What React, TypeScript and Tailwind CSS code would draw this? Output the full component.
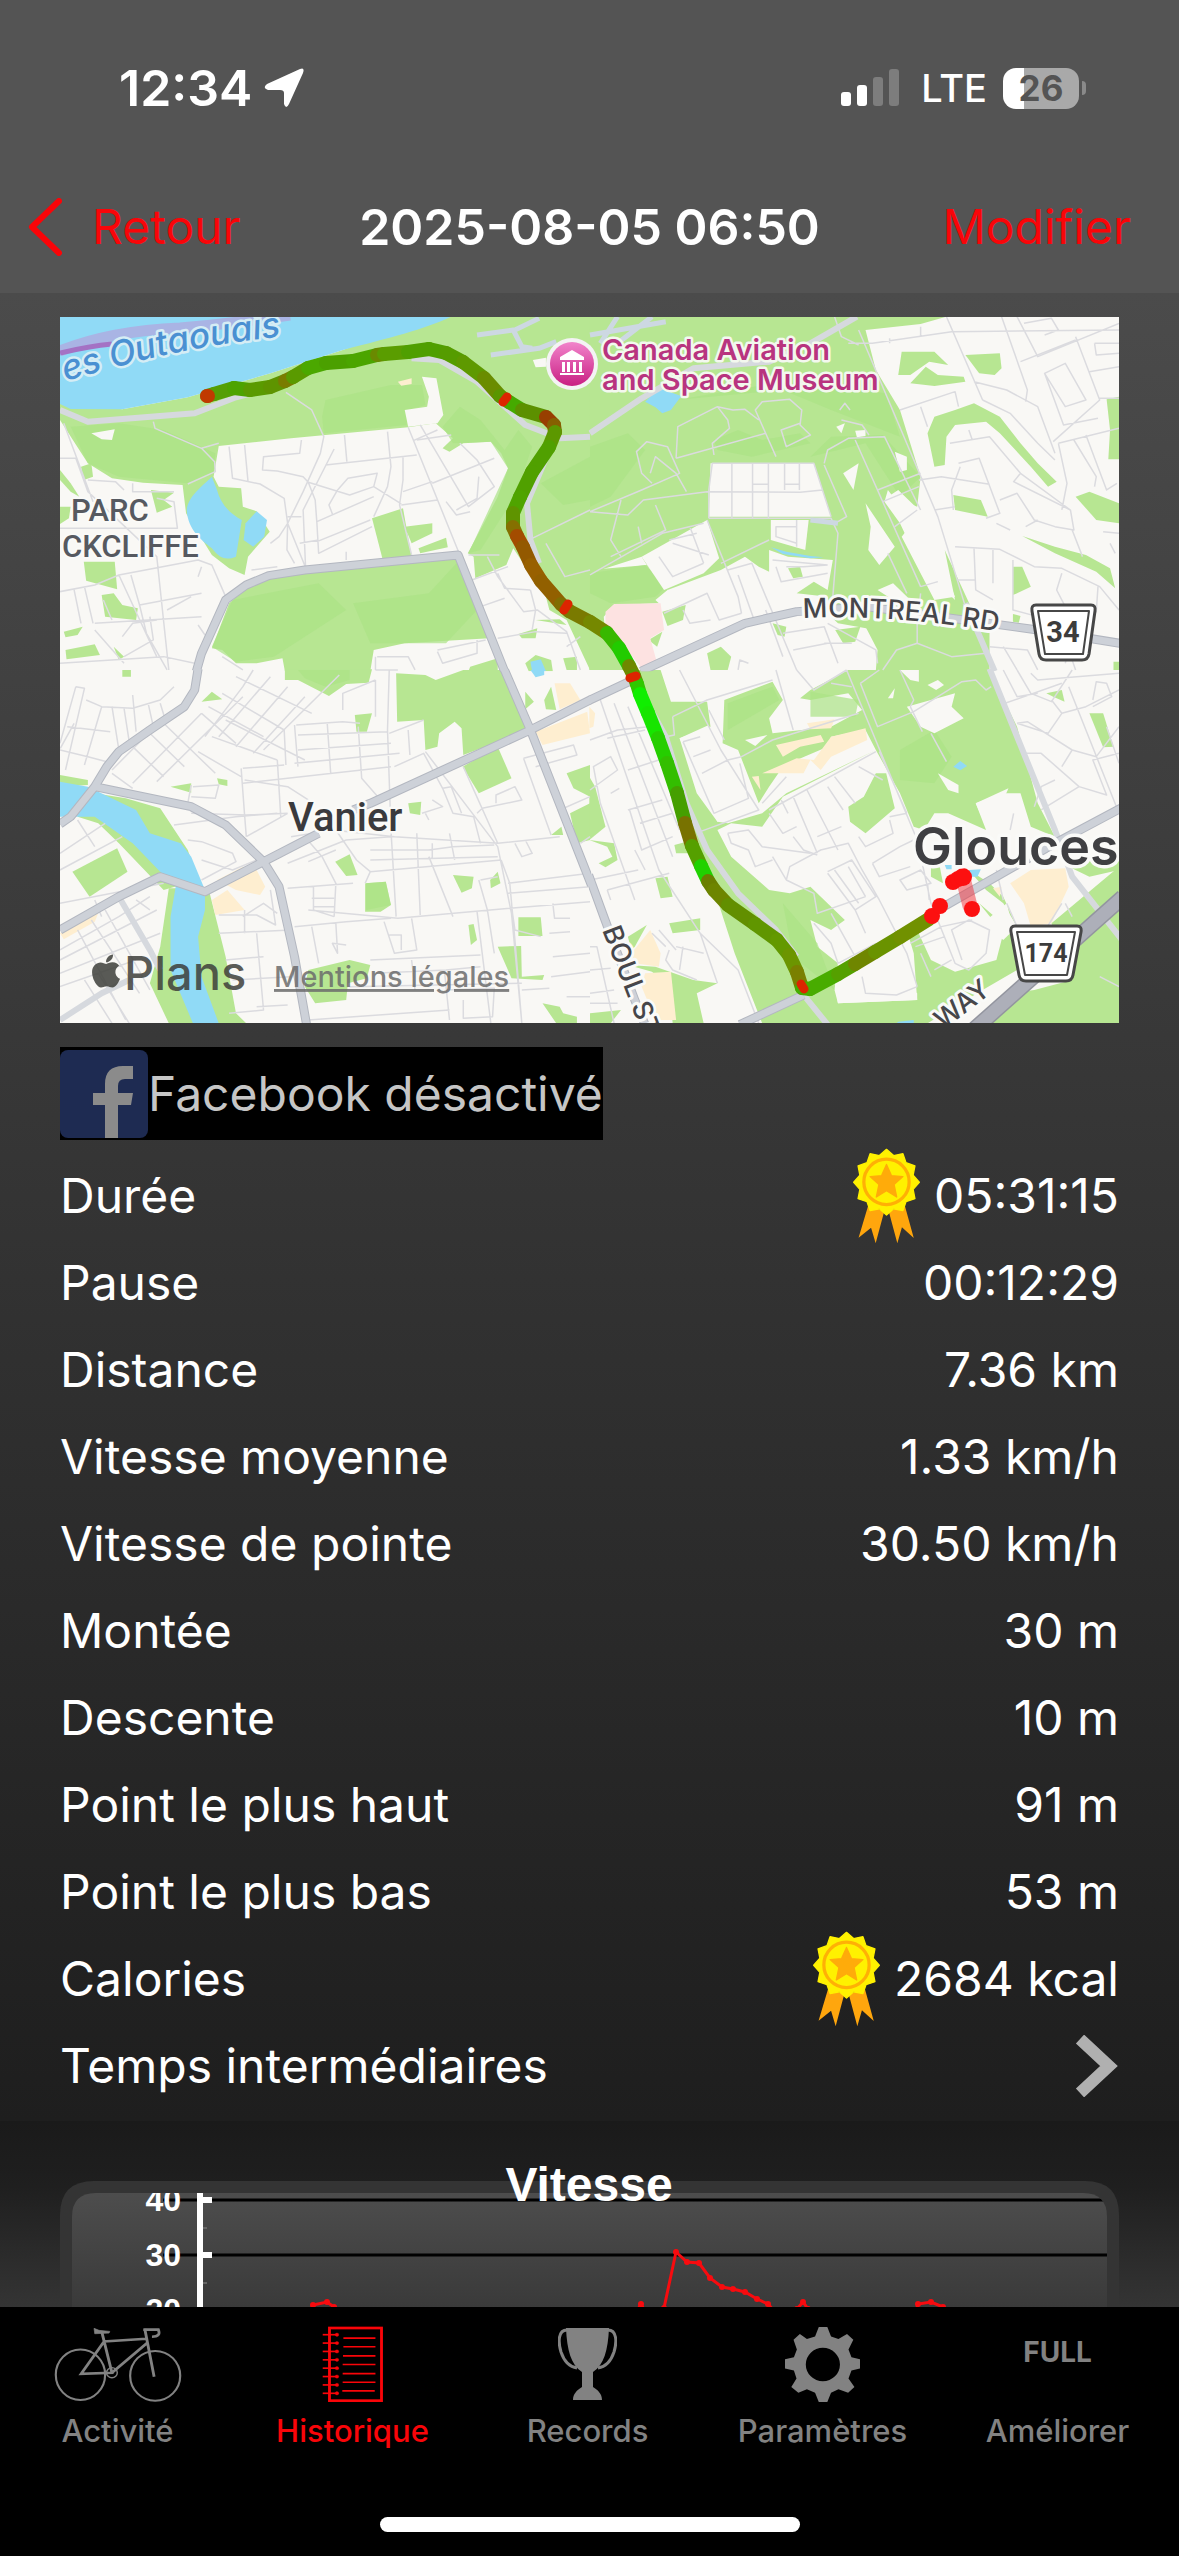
import { ReactNode } from "react";
import { FaApple } from "react-icons/fa";

const GREEN = "#b7e692";
const DEEP_GREEN = "#abe386";
const WATER = "#90daf6";

const stats = [
    { label: "Durée", value: "05:31:15", medal: true },
    { label: "Pause", value: "00:12:29" },
    { label: "Distance", value: "7.36 km" },
    { label: "Vitesse moyenne", value: "1.33 km/h" },
    { label: "Vitesse de pointe", value: "30.50 km/h" },
    { label: "Montée", value: "30 m" },
    { label: "Descente", value: "10 m" },
    { label: "Point le plus haut", value: "91 m" },
    { label: "Point le plus bas", value: "53 m" },
    { label: "Calories", value: "2684 kcal", medal: true },
];

// each tile is a quarter of the map with its own 1568x1080 grid
const tiles = [
    {
        x: 50,
        y: 310,
        green: [
            "M29 275L210 298L400 262L640 190L850 120L1165 0H1568V1080L1500 930L1450 900L1440 860L1400 800L1345 715L1325 765L1235 805L1230 740L1213 730L1260 640L1300 560L1330 475L1310 430L1280 395L1200 400L1160 425L1140 415L1170 385L1120 340L1040 352L700 385L490 408L475 500L490 530L555 535L560 590L600 604L638 665L575 740L565 795L520 775L470 735L395 610L385 525L270 518L180 505L110 460L29 330Z",
            "M470 1015L520 880L570 835L640 800L1185 745L1275 985L1030 1000L940 1020L930 1084H682L675 1045L600 1060L540 1060L500 1020Z",
            "M935 625L1025 595L1050 740L965 745Z", "M1030 650L1110 640L1110 670L1050 700Z",
            "M1070 715L1150 683L1155 712L1075 730Z", "M98 755H188L195 838L105 812Z",
            "M150 855L185 850L210 885L255 895L250 930L160 920Z", "M45 1020L130 1003L145 1035L48 1048Z",
            "M293 540L360 548L330 570L355 590L310 608Z", "M29 590H60L55 625L29 642Z", "M90 470L120 460L125 500L98 510Z",
            "M29 480L60 520L85 560L60 545L29 510Z", "M40 965L95 950L80 975L45 982Z", "M1360 972L1415 955L1410 985H1370Z",
            "M1380 1060L1410 1035L1455 1050L1460 1084H1390Z", "M1410 930L1480 928L1500 945Z", "M1220 1070L1300 1045V1084H1215Z",
            "M1490 1045L1530 1040V1080H1500Z", "M185 1010L215 1040L200 1050Z",
        ],
        deep: [
            "M60 350L200 340L330 360L480 430L475 490L400 520L200 500L110 460Z",
            "M800 270L990 225L1080 225L1090 285L1040 300L1035 345L795 370L790 320Z",
            "M1140 350L1190 290L1250 330L1320 420L1360 360L1400 410L1350 560L1250 720L1215 730L1330 475L1280 395L1170 400Z",
            "M1425 520L1568 440V570L1490 585Z", "M470 1010L530 870L780 820L860 900L650 1040L540 1055Z", "M880 880L1100 850L1180 760L1240 900L1150 1000L930 1000Z",
        ],
        water: [
            "M29 20H1165C1080 60 1000 80 850 120L640 190L400 262L210 298L60 297L29 282Z",
            "M470 500C440 530 400 560 397 600C400 660 440 690 470 715C495 750 515 750 540 740L557 630C520 610 495 580 485 540Z",
            "M600 604L630 630L622 680L590 710L562 690L568 640Z", "M1395 1055L1425 1048L1440 1084H1400Z",
        ],
        sand: ["M1010 215L1050 205V222L1020 227Z"],
        land: ["M120 370L188 358L180 390L150 388Z", "M1080 200L1122 205L1142 315L1125 340L1040 350L1030 300L1095 290L1100 260Z", "M1402 150L1440 143L1440 170L1410 172Z"],
        minor: "M29 445H75L110 545L310 740L345 1080M40 340L125 575M300 335L305 355L440 415L478 455L480 485L400 522M440 415L490 400M685 247L760 300L795 380L785 430L735 545L690 640L745 780M520 410L530 505L610 522L680 565L690 640L688 720L710 760M565 405L575 515M730 390L725 430L620 440L617 480L660 483L735 500L750 517L870 555L940 530L950 490L865 505L835 540L810 585L820 612M825 417L735 600L742 770M800 465L1065 435M855 375L862 455M980 365L990 470L980 530L940 620M1040 352L1190 735M1075 345L1215 590L1290 530L1240 450L1190 400M1290 445L1110 520M1055 392L1125 360M1065 390L1165 375M750 517L770 570L775 640L780 730L935 650M775 635L940 560M775 695L930 630M1025 440V510L1015 585L1050 735M1020 585L1125 570M940 530L1020 582M1110 515L1025 545M1180 600L1240 565L1245 500M1150 575L1180 615L1220 605M585 780L660 770M640 700L665 680L690 640M29 845L130 825L200 795L430 750L470 765L510 860M100 830L125 940M235 795L260 885L440 850M260 885L280 970L340 1080M130 940L440 920M200 795L310 1040M290 920L300 990L215 1040M410 860L340 900M70 840L90 940M155 870L180 930M29 655H370L360 575L310 565M110 510L190 515L215 540M240 520V545H360M210 980L240 940L310 930M440 770L430 800M29 1060L330 1040L420 1060M430 945L450 975M130 960L215 1060M1270 740L1300 800L1375 905L1415 900L1500 965L1540 1080M1225 810L1330 770M1250 890L1320 865M1300 790L1320 835L1395 840M1395 840L1410 900L1400 960M1300 985L1410 965L1500 970M1125 1020L1265 990M950 1040H1040L1060 1080M1125 1025L1140 1060L1240 1030V990M1400 685L1568 600M1440 700L1495 800L1568 780M1215 735H1305M500 1040L560 1080M945 1040V1080M690 620H730M725 700L780 690M860 725V750M1500 1010L1540 980",
        light: "M29 300L110 335L420 310L540 262L640 235M1050 145L1130 150L1240 215L1380 345L1480 385L1568 380M1450 420L1385 580L1395 690L1420 760",
        major: "M425 1084L440 1030L510 870L570 825L635 797L740 780L1185 735L1320 1084",
        minorPaved: "M1240 75L1345 60L1370 110L1400 115M1350 60L1420 25M1280 135L1420 115L1470 95",
    },
    {
        x: 590,
        y: 310,
        green: [
            "M-2 20H1035L960 42L800 60L830 180L900 300L960 500L950 590L880 560L865 540L855 575L900 640L960 770L1060 870L1030 720L1110 900L1160 960V1080H860L830 960L720 940L700 920L690 860L600 850L650 815L690 840L705 750L575 740L520 720L520 785L490 770L450 740L380 780L225 840L165 765L150 740L0 790Z",
            "M-2 780L165 765L225 840L190 870L200 880L70 885L40 920L45 980L110 1050L130 1080H-2Z",
            "M905 125H1000L1040 165L985 155L930 195H895Z", "M1090 135L1190 130L1195 175L1175 195L1130 190Z",
            "M930 220L975 170L1010 195L1085 200L1090 215L1000 228Z",
            "M1000 470L980 370L1000 320L1060 300L1115 280L1190 320L1250 400L1300 460L1355 515L1330 530L1280 470L1190 370L1150 335L1060 345L1035 380L1030 465Z",
            "M1500 268L1536 260V448H1505L1510 360Z", "M1410 560L1450 545L1536 580V640L1470 630Z",
            "M1055 555L1135 570L1155 620L1060 600Z", "M1255 678L1350 710L1440 735L1510 775L1525 835L1470 785L1350 730Z",
            "M1228 770H1255L1280 830L1240 850L1228 855Z", "M210 905L278 885L270 930L225 948Z", "M530 940L570 950L565 980L545 975Z",
            "M712 960L785 950L770 995L735 1000Z", "M170 990L210 965L195 1010Z", "M340 1030L380 1010L410 1040L400 1080H350Z",
            "M575 775L610 770L618 800L590 805Z", "M1228 912L1250 918L1245 938L1228 935Z", "M1520 1055H1536V1080H1520Z", "M800 950H1110L1160 1080H830L835 1020Z",
        ],
        deep: [
            "M0 410L110 370L160 420L60 560L0 590Z", "M360 390L430 360L500 390L610 370L640 400L470 440L370 420Z",
            "M700 380L850 375L960 500L900 560L800 400L640 440Z", "M250 270L560 215L860 250L900 380L700 300L560 240Z", "M0 790L160 765L220 830L190 860L60 880L0 850Z",
        ],
        water: ["M160 275L200 235L265 258L235 300L210 310L190 292Z", "M525 712L570 725L640 738L678 742L640 745L560 732Z"],
        sand: [],
        pink: ["M45 905L70 882L205 880L215 960L175 985L195 1060L150 1075L100 1010L45 975Z"],
        land: [
            "M350 460H650L700 620H345Z", "M525 630H635L625 720L525 690Z", "M150 740L340 630L375 745L330 790L215 840Z", "M800 580L885 710L840 765L808 720L815 650Z",
            "M735 490L780 460L765 540Z", "M885 425L920 440V480L900 485Z", "M865 560L895 540L955 600L1060 860L1000 870L905 680L950 620L880 590Z", "M715 350L740 340L730 370Z",
            "M770 362L800 360V378L775 382Z", "M835 840L880 820L940 880L880 870Z",
        ],
        minor: "M345 625H700L720 670L705 860M340 545L610 547L675 540M412 460V625M472 460V625M518 460V625M565 460V540M608 460V540M472 523H518M565 523H608M345 625V540L355 460H650L700 620M340 630L430 860L440 910M250 445L510 370L480 300L500 275L580 268L615 300L610 345L640 375L570 410L555 360L610 340M510 370L540 440M250 445L255 350L370 290L400 330L405 355L355 400L360 435M370 290L415 300L450 298L490 330M0 605L150 540L260 490L225 410L165 395L135 425L150 490L180 520M175 490L190 440L250 490L280 545M0 605L110 615L155 570L340 545M190 585L220 660L60 740M90 570L60 690L90 740M140 650L150 700M0 795L210 670L330 640M230 690L310 670M240 700L345 735M200 740L240 800L330 760M290 650L330 760M680 460L690 420L750 385L855 380L960 600M770 390L960 830M680 465L745 620L720 635M835 540L960 490M850 575L955 530M885 650L950 600M865 730L920 850M960 830L1010 815M780 60L1010 620L1090 890M750 100H820L1050 65L1536 60M710 20L730 80L780 105M1035 20L1140 270M1115 215L1210 240L1300 290L1350 430M1140 270L1220 310L1300 400L1350 450M1195 20L1270 240L1265 275M1240 20L1300 140L1536 40M1250 155L1410 90M1410 80L1480 270L1345 395M1480 265H1536M1320 190L1380 160L1440 270L1380 290ZM1320 190L1375 345L1475 325M1360 400L1536 355M1360 400L1385 520L1370 600M1405 390L1470 500L1465 530M1440 375L1500 540L1530 520M1465 100H1536M1465 100L1470 135L1536 130M1450 185L1536 170M1260 40L1340 25L1360 60L1320 75M900 300L1060 245L1070 290M960 290L980 350M1045 400L1160 380L1250 490L1395 600L1405 660L1350 650L1290 630L1240 550L1190 570M1100 360L1110 390M1070 460L1130 445L1190 610L1150 625M1055 600L1050 540L1075 470M955 510L1020 500L1160 523M1000 600L1060 590M1180 640L1220 660M1265 650L1300 630M1250 490L1230 515L1395 600M1400 660L1430 740M1060 710L1190 718L1290 770L1370 775L1480 830L1536 900M1115 715L1120 840L1170 870M1065 810H1120M1170 720V820M1228 750V900L1300 920M1370 790L1355 840L1380 890L1470 905L1475 830M1490 665L1536 670M1510 700L1525 730M380 760L520 690M400 780L470 760L600 1080M430 795L480 940M510 900L560 1040M540 770L555 815L690 790M530 750L690 765M570 770H620L690 765M560 970L680 950L720 1060M680 1000H760M690 940L830 1020L835 1060M590 1020L690 1000M215 910L340 850L375 930L440 910M270 900L290 940L350 930M850 1080L890 1020L950 1000L1050 1040L1150 1030M950 940V1000M950 940L960 850M1200 1010L1240 1080M1160 1010L1270 1020L1300 1080M1380 1060L1390 1020L1410 1080M430 1080L435 1050L460 1060M540 650H600V700L540 680ZM600 630V710M725 300L740 280L755 300M730 330L790 345L810 375M870 100V85M960 80V50",
        light: "M0 370L150 265L300 175L520 155L640 100L775 20M1090 880L1175 1084",
        major: "M148 1084L450 940L600 905L800 890L1300 960L1568 1005",
        minorPaved: "M0 75L220 35M30 100L80 20M80 100L180 20M640 630L720 640",
    },
    {
        x: 50,
        y: 670,
        green: [
            "M682 -2H935L925 38L860 42L810 78L720 30H682Z", "M1005 10L1090 15L1120 30L1200 0H1320L1390 180L1200 255L1195 175L1175 155L1130 190L1125 230L1090 240L1085 150L1008 155Z",
            "M1198 290L1300 230L1340 325L1245 370Z", "M885 135L935 130L920 185H890Z", "M440 95L470 65L500 88Z", "M350 350L410 340V368Z", "M485 325L515 330V348L490 343Z",
            "M29 315L110 330V345L29 350Z", "M130 370L220 385L320 415L400 540L430 630L330 660L200 520L140 460L80 440Z", "M65 605L195 535L225 605L115 680Z",
            "M345 655H460L510 860L540 1030L570 1060H345L290 940L320 830Z", "M828 575L870 553L893 615L860 618Z", "M915 640L975 635L990 705L960 725H915Z",
            "M1170 615L1230 620L1225 655L1195 668Z", "M1278 630L1300 605L1308 640L1280 655Z", "M1040 400L1078 395L1075 435L1045 430Z", "M1360 742H1425L1430 798H1360Z", "M1215 765L1230 762L1240 810L1222 825Z",
            "M750 900L870 870L930 885L920 925L865 940L860 990L770 1000L740 950Z", "M1300 830L1368 828L1370 920L1435 915L1430 930L1340 925Z", "M1430 1000L1480 1010L1490 1030L1530 1040V1060H1470Z",
            "M1500 310L1568 285V380L1520 355Z", "M1568 400L1510 430L1530 520L1568 510Z", "M1380 65L1405 95L1380 118Z", "M1435 90L1455 50L1470 120L1440 118Z", "M1455 495L1485 470L1490 495Z", "M210 0H235V20H210Z",
        ],
        deep: ["M720 0L870 0L870 30L800 50L740 25Z", "M918 640L975 635L990 705L918 720Z"],
        water: [
            "M29 335L110 350L250 420L290 490L380 520L410 560L450 660L450 720L430 800L440 920L490 1060H415L350 900V740L365 650L320 605L240 520L130 440L29 440Z",
            "M1395 0H1435V15L1410 22Z",
        ],
        sand: ["M485 630L560 590L600 600L625 650L610 675L540 660Z", "M470 690L515 660L565 720L480 735Z", "M1410 185L1560 125L1568 190L1430 225Z", "M1465 40H1510L1540 90L1480 118Z", "M29 790L140 730L130 755L40 808Z"],
        land: [],
        minor: "M29 240L110 260L165 275M75 50L100 55L45 300M75 50L29 220M105 90L150 110L240 115L320 90L360 50M150 110L100 285M180 110L200 240M215 115L230 215M240 75L250 185M285 100L300 170M320 100L335 150M50 170L175 185M30 235L70 160M310 335L560 80M180 300L290 185M240 340L440 130M180 310L240 355M240 230L330 320M290 190L390 290M330 160L480 310M440 130L540 220M460 110L620 200M500 70L680 180M540 20L760 130M590 0L560 50L450 200M640 20L490 200M690 50L540 230M740 80L590 250M840 15L620 240M430 245L555 320M470 200L660 270M510 150L740 270M710 165L720 290M680 180L685 285M715 165L850 155L900 160M720 195L980 185M720 240L990 220M710 280L1015 250M560 295L680 285M560 340L820 310L990 290M555 295L565 435L570 500M660 270L670 440M805 160L815 310M895 170L905 325L960 390M985 0L980 180L990 480M945 30V140M1010 0H945M945 30L850 70V120M1040 180L1045 255M985 190L1085 150M1000 290L1085 250L1140 355L1170 430L1230 440L1250 520M1140 355L1165 350L1195 430M1090 245L1300 530L1340 730L1370 1060M1200 290L1300 520M1240 430L1255 415L1370 390L1350 350L1295 375V400M1375 265L1520 225L1530 255L1410 290M1375 265L1455 495M690 430L570 435L410 430M565 330L690 350L750 390M570 500L690 430M415 350L490 345L480 385L410 380M410 345L400 400M360 465L540 440L660 430M400 510L440 515L530 550L540 575L440 630M440 570L530 600L600 570M740 500L790 560L830 640L825 740M810 450L890 570L930 605L915 640M700 500L820 480L1000 500L1300 520L1480 500M690 580L860 510L990 500M750 575L830 540M930 540H1100L1170 530L1290 525M930 570L1300 560M930 605L1310 570M990 480L1005 740M1065 490L1075 735M1110 520V565M1160 490L1175 570M1350 520L1370 560L1400 550L1380 510M690 655L880 640M760 685H825M765 710H825M750 720L1010 745L1335 715L1568 695M710 770L860 755L990 745M765 650V720L825 740M760 770L780 880M830 760L835 850L820 820L860 825M970 755L1000 850L1065 840L1050 745M985 795H1020V840M1100 560L1170 740M1240 725L1280 1060M1270 720L1290 850M1310 570L1335 640L1350 810L1370 1060M1330 640L1568 610M1330 670L1568 650M1340 710L1350 780L1425 800M1460 700L1465 745H1510M1450 790L1510 785M1460 860L1568 850M1455 920L1568 905M1370 960L1450 955M930 870L1250 855M940 910L1150 900L1250 890M1050 870L1060 960M1145 900L1160 1050M870 950L1370 940M1150 960L1290 955L1285 1040L1200 1045V990M750 1050L1160 1020M600 790L620 1020L520 1030M490 735H600L655 765L640 660M565 720V790M490 790L700 780M510 870L620 860M530 930L700 920M600 1010L690 1005M210 500L29 600M29 550L160 460M80 450L130 530M130 690L150 740M29 700L330 640M80 780L220 1050M120 750L260 970M29 870L310 720M29 910L320 790M29 950L250 870M140 910L230 1060M100 930L180 1060M29 840L200 740L290 680M250 690L290 720M160 720L290 960M1250 630L1300 620M1245 630L1270 720M1540 520L1568 500M1480 420L1568 380M1500 980H1568M1110 390L1140 410L1080 430M1090 430L1100 450M560 740L620 700L660 730",
        light: "M200 680L290 840L320 900M29 1050L150 970L230 930",
        major: "M430 -4L420 60L390 110L290 180L200 245L165 290L130 350L60 440L29 462M130 350L410 410L510 465L620 575L665 650L710 860L745 1064M29 780L200 680L320 620L450 665L620 575L780 490M880 420L930 400L1395 180L1572 88M1318 -4L1395 180L1572 645",
        minorPaved: "",
    },
    {
        x: 590,
        y: 670,
        green: [
            "M130 0H205L235 95L340 95L350 170L260 205L310 370L370 455L400 460L500 430L570 370L830 240L800 180L700 200L690 230L600 270L560 290L520 350L490 400L430 240L385 220L390 90L530 35L560 90L520 145L530 190L700 170L790 120L750 70L640 90L610 85L640 60L750 0H1160L1240 170L1300 400L1350 500L1280 470L1250 370L1200 370L1120 400L1150 480L1040 430L1000 430L970 480L940 470L900 370L830 240L560 380L500 470L410 460L370 480L410 560L520 660L580 670L640 650L740 750L700 780L640 750L660 830L720 880L710 960L720 1000L950 990L940 850L920 780L950 780L990 870L1060 905L1180 870L1200 790L1130 700L1220 780L1240 900L1140 960L1060 1010L980 1060H500L420 850L370 690L310 560L230 250Z",
            "M750 410L795 380L830 310L860 310L885 415L800 490L755 455Z", "M-2 320L15 350L45 470L-2 510Z", "M25 580L65 560L50 530L-2 510L70 520L80 570L45 592Z", "M245 525L280 515L305 550H250Z",
            "M190 625L225 620L240 680L205 685Z", "M230 760L320 745V780L240 790Z", "M110 800L165 765L130 830L120 840Z", "M1325 70L1370 60L1378 95L1345 80Z", "M1450 130L1490 130L1520 230L1490 232Z",
            "M1340 760L1536 590V1060H1150L1220 970L1290 960L1400 930Z", "M110 885L190 890L300 930L370 940L310 970L330 1060H240L230 950L180 905Z", "M0 1030L90 1020L60 1060H0Z", "M1010 560L1025 640L990 620V560Z",
            "M1380 585L1536 560V600L1450 620Z", "M1100 600L1160 640L1200 680L1240 770L1200 700L1150 660Z",
        ],
        deep: ["M400 100L530 50L550 90L400 180Z", "M900 240L1000 180L1050 260L1000 340L900 330Z", "M560 700L660 820L710 960L590 860Z", "M640 65L780 90L770 140L640 140Z"],
        water: ["M1055 290L1075 273L1095 288L1075 301Z", "M1100 600L1135 598L1125 620H1105Z", "M895 1055L940 1050V1060H890Z", "M1030 585H1050V598H1035Z"],
        sand: [
            "M630 160L710 148L700 175L640 178Z", "M540 225L670 195L680 215L610 230L560 260Z", "M500 310L600 265L650 270L700 200L800 175L805 210L700 260L670 300L640 270L620 310Z", "M1220 640L1280 600L1380 595L1390 650L1340 760L1280 770L1260 700Z",
            "M1170 655L1195 650L1190 680Z", "M120 850L175 780L205 850L200 890L130 880Z", "M160 910L235 905L250 1050H190L150 950Z", "M-2 110L15 130L10 170L-2 175Z", "M470 320L490 318L495 360Z",
        ],
        land: ["M920 110L1060 70L1050 110L1085 145L1000 190L960 170Z", "M865 85L885 55L880 85Z", "M980 45L1010 30L1028 45L1005 60Z", "M1010 310L1070 345V370L1040 360Z", "M1120 400L1215 355L1200 390L1155 480Z", "M450 210L515 195L480 228Z", "M260 205L345 165L360 230L430 260L485 410L370 455Z", "M710 935L830 910L950 970V990L720 1000Z", "M1140 760L1210 700L1230 780L1200 810Z", "M900 0H955V35L930 30Z"],
        minor: "M30 90L200 600L320 790L370 940M70 100L240 560M110 110L260 480M0 210L80 180L170 170M50 205L160 180M110 300L200 270M0 360L80 300L60 260L10 290L30 400L130 690M110 420L210 390M115 420L150 540L240 500M145 460L240 430M60 370L85 355M130 540L160 600M50 660L230 610M0 630L140 600M60 690L50 660M240 140L340 90L530 30M240 140L245 195L220 200M345 120L390 210M260 0L380 240L490 420L320 485M270 215L320 200M300 260L350 240M325 310L400 270L440 260L530 210L780 130M270 215L360 430L460 385L435 280M540 0L590 180M600 0L650 60L745 0M700 40L760 50M745 0L950 510L990 700M785 40L835 170L940 125L1080 35L1120 30L1150 60L1165 50M785 40L840 0M900 0L940 90L930 110L965 185M990 190L1035 275M840 245L920 430M520 420L830 245M520 430L560 490L600 470M555 390L575 430M590 380L660 550M630 360L720 540M690 350L735 420M710 320L770 400M780 290L850 330M590 500L620 540L660 555M660 500L730 470M400 490L460 480L500 530L640 550M400 490L410 520L460 540L480 590L530 570M530 560L570 630L580 590L670 540L750 520L790 600L840 690L920 850L950 950M690 605L760 570L830 680L770 720L690 610M710 600L780 700M750 590L800 680M570 630L650 670L660 730L800 680M650 760L700 820L720 880L830 820M700 730L770 860M770 720L800 790M820 580L900 530L940 510M820 580L840 620L930 590M900 630L960 600L990 640L920 660ZM780 500L800 530L880 490L870 450M870 440L920 430M500 400L570 320M990 700L1060 880L1100 900L1150 850L1160 780L1100 750L1050 780L1080 870M930 820L1020 770L1110 750M945 830L1030 800M1000 900L1050 870M960 850L990 920M980 640L985 690M1200 0L1240 80L1300 70M1240 0L1280 70L1340 95L1400 0M1205 100L1370 40M1280 10L1300 30L1536 10M1340 90L1370 130L1440 110L1536 60M1370 130L1330 190L1240 160M1240 160L1270 155L1400 240L1470 260L1536 170M1260 250L1310 250L1420 350L1500 375L1460 270L1536 250M1310 420L1420 350M1290 410L1310 350L1350 330M1400 240L1370 290M1390 50L1536 430M1460 90L1470 35L1500 40L1515 80L1460 110M1500 170L1536 280M1230 430L1220 480M1210 700L1240 770M250 830L330 850M230 840L220 870L240 900L310 930M270 830L260 900M180 790L220 830M200 780L250 840M0 900L60 895M0 970L70 960M0 1000L80 1000M320 790L430 900L490 1060M790 920L800 970L890 975L950 950M1480 920L1536 950M1400 740L1380 700M1310 800L1370 700M1180 600L1200 690M0 830H20L70 1060",
        light: "M140 50L220 200L280 400L340 540L430 670L540 780L600 860M1160 -4L1350 480L1400 620L1560 830M620 975L690 1064",
        major: "M-4 92L140 22M435 1064L620 975M1010 720L1350 520L1568 400M-4 615L40 740L130 990L160 1064",
        minorPaved: "",
    },
];

const route: [number, number, string][] = [
    [207, 396, "#c03a00"], [214, 394, "#689600"], [234, 388, "#559f05"], [250, 390, "#4da300"], [270, 387, "#5a9a00"], [285, 381, "#5e9400"],
    [293, 377, "#7a7c00"], [308, 368, "#5a9a00"], [326, 363, "#4ba800"], [353, 361, "#4ba000"], [377, 355, "#4ba500"], [384, 354, "#6a8a00"], [408, 352, "#5a9d00"],
    [429, 349, "#4f9f00"], [446, 353, "#4f9f00"], [463, 362, "#559c00"], [484, 378, "#5e9900"], [500, 396, "#6a8c00"], [509, 402, "#5a9600"], [522, 410, "#45aa00"],
    [546, 417, "#5c9000"], [554, 425, "#983f00"], [555, 432, "#866000"], [549, 447, "#5c9800"], [532, 472, "#50a000"], [520, 497, "#50a000"], [513, 513, "#4fa400"], [513, 527, "#5f9400"],
    [517, 536, "#857000"], [523, 547, "#a34c00"], [531, 565, "#935900"], [541, 581, "#986000"], [561, 604, "#926000"], [569, 611, "#806e00"], [590, 622, "#7a7a00"], [607, 633, "#758800"], [619, 648, "#38b800"],
    [629, 666, "#22cb00"], [634, 676, "#6f8800"], [637, 684, "#5a9800"], [640, 694, "#30c800"], [648, 713, "#10ee00"], [658, 738, "#17e500"], [667, 763, "#25ce00"], [677, 793, "#33be00"],
    [685, 823, "#459f00"], [692, 846, "#787200"], [701, 866, "#55a000"], [708, 881, "#20d200"], [714, 890, "#6a7f00"], [728, 905, "#6d8500"], [755, 924, "#628f00"], [777, 940, "#609600"],
    [789, 955, "#639900"], [797, 972, "#6c9500"], [802, 988, "#7a8000"], [810, 989, "#42ae00"], [838, 974, "#48ac00"], [855, 964, "#55a000"], [875, 952, "#6f8600"], [900, 937, "#6a9300"], [929, 919, "#719100"],
];

const routeStops = [
    { x: 932, y: 916, r: 8 },
    { x: 940, y: 906, r: 8 },
    { x: 953, y: 882, r: 8 },
    { x: 958, y: 879, r: 8 },
    { x: 963, y: 877, r: 9 },
    { x: 972, y: 909, r: 8 },
];

const halo = { paintOrder: "stroke" as const, strokeLinejoin: "round" as const };

function RouteMap() {
    const layer = (render: (tile: (typeof tiles)[number]) => ReactNode) =>
        tiles.map((tile, i) => (
            <g key={i} transform={`translate(${tile.x} ${tile.y}) scale(0.3444 0.3333)`} clipPath="url(#tile)">
                {render(tile)}
            </g>
        ));

    return (
        <svg viewBox="60 317 1059 706" className="block w-full bg-[#f9f8f5]" aria-label="Plan du parcours">
            <defs>
                <clipPath id="tile"><rect x="-4" y="-4" width="1576" height="1088" /></clipPath>
                <linearGradient id="pin" x1="0" y1="0" x2="0" y2="1">
                    <stop offset="0" stopColor="#f184cb" />
                    <stop offset="1" stopColor="#c91f83" />
                </linearGradient>
                <path id="river" d="M65 381Q105 370 140 361Q200 345 310 333" />
                <path id="montreal" d="M790 619Q885 612 1012 634" />
                <path id="boul" d="M602 930L656 1070" />
                <path id="way" d="M937 1035L1010 979" />
            </defs>

            {layer((t) => t.green.map((d, i) => <path key={i} d={d} fill={GREEN} />))}
            {layer((t) => t.deep.map((d, i) => <path key={i} d={d} fill={DEEP_GREEN} opacity="0.7" />))}
            {layer((t) => (
                <>
                    {t.land.map((d, i) => <path key={i} d={d} fill="#f9f8f5" />)}
                    {t.sand.map((d, i) => <path key={i} d={d} fill="#feeed0" />)}
                    {t.pink?.map((d, i) => <path key={i} d={d} fill="#fde2e1" />)}
                    {t.water.map((d, i) => <path key={i} d={d} fill={WATER} />)}
                </>
            ))}
            <path d="M60 351Q110 331 180 328Q230 324 290 315" fill="none" stroke="#a9b4e4" strokeWidth="11" />
            <path d="M60 353Q90 346 112 344" fill="none" stroke="#a472c4" strokeWidth="5" />

            <g fill="none" strokeLinejoin="round">
                {layer((t) => <path d={t.minor} stroke="#dbdbdf" strokeWidth="1.5" vectorEffect="non-scaling-stroke" />)}
                {layer((t) => <path d={t.minorPaved} stroke="#cdd8e2" strokeWidth="5" vectorEffect="non-scaling-stroke" />)}
                {layer((t) => <path d={t.light} stroke="#d6d9de" strokeWidth="6" vectorEffect="non-scaling-stroke" />)}
                {layer((t) => <path d={t.major} stroke="#b3b7c0" strokeWidth="9" vectorEffect="non-scaling-stroke" />)}
                {layer((t) => <path d={t.major} stroke="#cdd1d8" strokeWidth="7" vectorEffect="non-scaling-stroke" />)}
                <path d="M970 1033L1123 897" stroke="#93959f" strokeWidth="16" />
                <path d="M970 1033L1123 897" stroke="#adafb9" strokeWidth="13" />
            </g>

            <g strokeWidth="14" strokeLinecap="round">
                {route.slice(1).map(([x, y, color], i) => (
                    <line key={i} x1={route[i][0]} y1={route[i][1]} x2={x} y2={y} stroke={color} />
                ))}
                <path d="M207 396h1" stroke="#c03a00" />
                <path d="M507 397l-4 5M568 604l-4 6M630 678l6 -2M801 984l3 5" stroke="#dc2500" strokeWidth="9" />
                <path d="M964 882L970 906" stroke="#f3303a" strokeWidth="15" opacity="0.5" />
            </g>
            {routeStops.map((stop) => <circle key={stop.x} cx={stop.x} cy={stop.y} r={stop.r} fill="#fc1010" />)}

            <circle cx="572" cy="364" r="26" fill="#f4f3f4" />
            <circle cx="572" cy="364" r="22" fill="url(#pin)" />
            <path d="M560 360V357L572 350L584 357V360ZM562 362h3v10h-3zM567 362h3v10h-3zM573 362h3v10h-3zM579 362h3v10h-3zM560 373h24v2h-24z" fill="#fff" />
            <g fontFamily="Inter, sans-serif" fontWeight="600" fontSize="29" fill="#b8347f" stroke="#f3f8ee" strokeWidth="5" {...halo}>
                <text x="602" y="360">Canada Aviation</text>
                <text x="602" y="390">and Space Museum</text>
            </g>
            <g fontFamily="Roboto, sans-serif" fontWeight="500" stroke="#fafaf8" {...halo}>
                <text x="71" y="521" fontSize="31" fill="#565960" strokeWidth="4">PARC</text>
                <text x="62" y="557" fontSize="31" fill="#565960" strokeWidth="4">CKCLIFFE</text>
                <text x="288" y="831" fontSize="40" fill="#3a3a3d" strokeWidth="5">Vanier</text>
            </g>
            <g fontFamily="Inter, sans-serif" fontWeight="500" fontSize="27" fill="#46464a" stroke="#fafaf8" strokeWidth="6" {...halo}>
                <text textAnchor="middle"><textPath href="#montreal" startOffset="50%">MONTREAL RD</textPath></text>
                <text><textPath href="#boul">BOUL ST</textPath></text>
                <text><textPath href="#way" startOffset="8">WAY</textPath></text>
            </g>
            <text fontFamily="Inter, sans-serif" fontWeight="500" fontStyle="italic" fontSize="35" fill="#4a90d2" stroke="#d5edf5" strokeWidth="5" {...halo}>
                <textPath href="#river">es Outaouais</textPath>
            </text>
            <text x="913" y="865" fontFamily="Inter, sans-serif" fontWeight="600" fontSize="52" fill="#3f3f42" stroke="#fafaf8" strokeWidth="7" {...halo}>Glouces</text>

            <g fill="#fff" stroke="#474747" strokeLinejoin="round">
                <path d="M1036 605H1091Q1096 605 1095 611L1089 654Q1088 660 1082 660H1046Q1040 660 1039 654L1032 611Q1031 605 1036 605Z" strokeWidth="3" />
                <path d="M1038 611H1089L1083 654H1045Z" strokeWidth="2" />
                <path d="M1015 926H1077Q1082 926 1081 932L1073 975Q1072 981 1066 981H1026Q1020 981 1019 975L1011 932Q1010 926 1015 926Z" strokeWidth="3" />
                <path d="M1017 932H1075L1067 975H1025Z" strokeWidth="2" />
            </g>
            <g fontFamily="Roboto, sans-serif" fontWeight="700" fontSize="29" fill="#3c3c3c" textAnchor="middle">
                <text x="1063" y="642">34</text>
                <text x="1046" y="962" fontSize="25">174</text>
            </g>

            <g fontFamily="Inter, sans-serif" fontWeight="500" fillOpacity="0.85">
                <FaApple x="87" y="952" size={38} color="#3d3e3a" />
                <text x="124" y="990" fontSize="47" fill="#3d3e3a">Plans</text>
                <a href="#mentions">
                    <text x="274" y="987" fontSize="29" fill="#6b6b6b" textDecoration="underline">Mentions légales</text>
                </a>
            </g>
        </svg>
    );
}

function Medal() {
    const burst = Array.from({ length: 24 }, (_, i) => {
        const a = (i * Math.PI) / 12;
        const r = i % 2 ? 84 : 100;
        return `${417 + r * Math.sin(a)},${156 - r * Math.cos(a)}`;
    }).join(" ");
    return (
        <svg viewBox="315 52 204 292" className="h-24 w-[67px]" aria-hidden="true">
            <path d="M362 225L332 325L370 295L384 342L410 245ZM472 225L500 326L464 293L450 342L424 245Z" fill="#ffa60d" />
            <polygon points={burst} fill="#fff100" stroke="#fff100" strokeWidth="4" strokeLinejoin="round" />
            <circle cx="417" cy="155" r="69" fill="none" stroke="#ffb005" strokeWidth="10" />
            <path d="M417 102L432 136L467 139L440 163L448 201L417 182L386 201L394 163L367 139L402 136Z" fill="#ffab0a" stroke="#ffab0a" strokeWidth="4" strokeLinejoin="round" />
        </svg>
    );
}

function StatusBar() {
    return (
        <div className="flex h-[176px] items-center justify-between pr-[92px] pl-[119px]">
            <div className="flex items-center gap-3 text-[50px] font-semibold">
                12:34
                <svg viewBox="0 0 40 40" className="h-10 w-10" aria-hidden="true">
                    <path d="M36 1Q41 -1 39 5L25 36Q22 42 20 36V25Q20 22 16 22H4Q-2 20 3 16Z" fill="#fff" />
                </svg>
            </div>
            <div className="flex items-center">
                <svg viewBox="0 0 60 38" className="h-[38px] w-[60px]" aria-hidden="true">
                    <rect x="0" y="23" width="10" height="14" rx="3" fill="#fff" />
                    <rect x="16" y="16" width="10" height="21" rx="3" fill="#fff" />
                    <rect x="32" y="8" width="10" height="29" rx="3" fill="#7d7d7d" />
                    <rect x="48" y="0" width="10" height="37" rx="3" fill="#7d7d7d" />
                </svg>
                <span className="ml-5 text-[38px] font-medium">LTE</span>
                <div className="ml-4 flex h-[41px] w-[76px] items-center justify-center rounded-[13px] bg-linear-to-r from-white from-27% to-[#a9a9a9] to-27% text-[35px] font-bold text-[#545454]">
                    26
                </div>
                <div className="mr-px ml-[3px] h-3.5 w-1 rounded-r-full bg-[#8a8a8a]" />
            </div>
        </div>
    );
}

const seriesRuns = [
    "313,184 327,181 334,186",
    "637,190 641,183 645,190",
    "664,187 676,131 687,141 699,142 710,157 722,166 733,168 745,171 757,178 768,183 774,190",
    "797,188 803,181 808,188",
    "916,190 918,183 931,181 943,186",
];

function SpeedChart() {
    return (
        <svg viewBox="0 0 1179 186" className="block w-full" aria-label="Vitesse">
            <defs>
                <linearGradient id="page" x1="0" y1="0" x2="0" y2="1">
                    <stop offset="0" stopColor="#1a1a1a" />
                    <stop offset="0.35" stopColor="#1f1f1f" />
                    <stop offset="1" stopColor="#343434" />
                </linearGradient>
                <linearGradient id="plot" x1="0" y1="0" x2="0" y2="1">
                    <stop offset="0" stopColor="#4d4d4d" />
                    <stop offset="1" stopColor="#3a3a3a" />
                </linearGradient>
                <clipPath id="plot-area"><path d="M72 186V96Q72 72 96 72H1083Q1107 72 1107 96V186Z" /></clipPath>
            </defs>
            <rect width="1179" height="186" fill="url(#page)" />
            <path d="M60 186V94Q60 60 94 60H1085Q1119 60 1119 94V186Z" fill="#343434" />
            <g clipPath="url(#plot-area)">
                <rect x="72" y="72" width="1035" height="114" fill="url(#plot)" />
                <path d="M163 79H1107M163 134H1107" stroke="#000" strokeWidth="3" />
                <path d="M203 107h4M203 162h4" stroke="#666" strokeWidth="2" />
                <path d="M200 72V186M200 79h12M200 134h12" stroke="#fff" strokeWidth="6" />
                <g fontFamily="Liberation Sans, sans-serif" fontWeight="700" fontSize="32" fill="#fff" textAnchor="end">
                    <text x="181" y="90">40</text>
                    <text x="181" y="145">30</text>
                    <text x="181" y="200">20</text>
                </g>
                {seriesRuns.map((points) => (
                    <g key={points}>
                        <polyline points={points} fill="none" stroke="#f80b0f" strokeWidth="3" />
                        {points.split(" ").map((p) => {
                            const [x, y] = p.split(",");
                            return <circle key={p} cx={x} cy={y} r="3" fill="#f80b0f" />;
                        })}
                    </g>
                ))}
            </g>
            <text x="589" y="80" fontFamily="Liberation Sans, sans-serif" fontWeight="700" fontSize="48" fill="#fff" textAnchor="middle">Vitesse</text>
        </svg>
    );
}

function BikeIcon() {
    return (
        <svg viewBox="42 556 358 226" preserveAspectRatio="none" className="h-[76px] w-32" fill="none" stroke="currentColor" strokeWidth="6" aria-hidden="true">
            <ellipse cx="116" cy="701" rx="69" ry="75" />
            <ellipse cx="325" cy="704" rx="70" ry="74" />
            <circle cx="204" cy="695" r="15" strokeWidth="4" />
            <path d="M176 575L204 695L118 698L182 602L300 594M204 695L304 605M296 565L322 707" strokeWidth="8" />
            <path d="M292 567H334Q342 588 316 588" strokeWidth="8" />
            <path d="M154 563L168 569L198 572L196 577L156 579Z" fill="currentColor" strokeWidth="2" />
        </svg>
    );
}

function NotebookIcon() {
    const rings = [582, 607, 632, 657, 682, 707, 732, 757];
    return (
        <svg viewBox="790 556 174 230" preserveAspectRatio="none" className="h-[77px] w-[62px]" fill="none" stroke="currentColor" aria-hidden="true">
            <rect x="811" y="562" width="146" height="217" strokeWidth="8" />
            {rings.map((y) => (
                <g key={y}>
                    <path d={`M792 ${y}H832`} strokeWidth="5" />
                    <circle cx="832" cy={y} r="5" fill="currentColor" />
                </g>
            ))}
            <path d="M850 592H940M850 618H940M849 645H940M848 671H940M848 698H940M848 724H940M847 750H938" strokeWidth="5" />
        </svg>
    );
}

function TrophyIcon() {
    return (
        <svg viewBox="0 0 59 72" className="h-[72px] w-[59px]" aria-hidden="true">
            <path d="M8 0H51C50 22 46 37 35 44V59C40 62 44 66 44 72H15C15 66 19 62 24 59V44C13 37 9 22 8 0Z" fill="currentColor" />
            <path d="M9 2C0 2 0 14 3 24C6 33 12 39 19 40M50 2C59 2 59 14 56 24C53 33 47 39 40 40" fill="none" stroke="currentColor" strokeWidth="3" />
        </svg>
    );
}

function GearIcon() {
    return (
        <svg viewBox="504 558 202 224" preserveAspectRatio="none" className="h-[75px] w-[75px]" aria-hidden="true">
            <path
                fillRule="evenodd"
                fill="currentColor"
                d="M595 558H618L628 586L648 594L671 579L688 596L675 625L683 648L706 654V682L683 688L675 712L691 737L674 754L648 744L628 754L618 782H595L585 754L563 744L540 754L521 737L535 712L528 688L504 682V654L528 648L536 625L527 596L544 579L563 594L585 586ZM606 620A46 50 0 1 0 606 720A46 50 0 1 0 606 620Z"
            />
        </svg>
    );
}

const tabs = [
    { label: "Activité", icon: <BikeIcon /> },
    { label: "Historique", icon: <NotebookIcon />, active: true },
    { label: "Records", icon: <TrophyIcon /> },
    { label: "Paramètres", icon: <GearIcon /> },
    { label: "Améliorer", icon: <span className="pb-6 text-[28px] font-bold">FULL</span> },
];

export default function App() {
    return (
        <div className="flex min-h-screen flex-col bg-black font-['Inter',sans-serif] text-white">
            <header className="bg-[#545454]">
                <StatusBar />
                <nav className="grid h-[117px] grid-cols-[1fr_auto_1fr] items-center px-7 pb-[15px] text-5xl">
                    <button className="flex items-center gap-[30px] justify-self-start text-[#f90509]">
                        <svg viewBox="0 0 34 58" className="h-[58px] w-[34px]" aria-hidden="true">
                            <path d="M31 3L4 29L31 55" fill="none" stroke="currentColor" strokeWidth="6" strokeLinecap="round" strokeLinejoin="round" />
                        </svg>
                        Retour
                    </button>
                    <h1 className="text-[50px] font-semibold">2025-08-05 06:50</h1>
                    <button className="mr-5 justify-self-end text-[#f90509]">Modifier</button>
                </nav>
            </header>

            <main className="flex-1">
                <div className="bg-linear-to-b from-[#4b4b4b] to-[#1e1e1e] px-[60px] pt-6 pb-3 text-5xl">
                    <RouteMap />

                    <button className="mt-6 mb-3 flex h-[93px] items-center bg-black text-[#c6c6c6]">
                        <svg viewBox="0 0 88 88" className="h-[88px] w-[88px]" aria-hidden="true">
                            <rect width="88" height="88" rx="8" fill="#1e2b52" />
                            <path d="M45 88V55H33V43H45V34Q45 16 63 16H73V29H65Q58 29 58 36V43H73L71 55H58V88Z" fill="#8b8b8b" />
                        </svg>
                        Facebook désactivé
                    </button>

                    <dl>
                        {stats.map((stat) => (
                            <div key={stat.label} className="flex h-[87px] items-center justify-between">
                                <dt>{stat.label}</dt>
                                <dd className="flex items-center gap-3.5">
                                    {stat.medal && <Medal />}
                                    {stat.value}
                                </dd>
                            </div>
                        ))}
                    </dl>
                    <button className="flex h-[87px] w-full items-center justify-between">
                        Temps intermédiaires
                        <svg viewBox="0 0 44 62" className="h-[62px] w-11" aria-hidden="true">
                            <path d="M5 4L34 31L5 58" fill="none" stroke="#b0b0b0" strokeWidth="12" />
                        </svg>
                    </button>
                </div>

                <SpeedChart />
            </main>

            <footer className="bg-black pb-6">
                <div className="grid grid-cols-5 pt-[18px] pr-1">
                    {tabs.map((tab) => (
                        <button key={tab.label} className={`flex flex-col items-center ${tab.active ? "text-[#f90509]" : "text-[#828282]"}`}>
                            <span className="flex h-[78px] items-center">{tab.icon}</span>
                            <span className="mt-2 text-[31px] leading-10 font-medium">{tab.label}</span>
                        </button>
                    ))}
                </div>
                <div className="mx-auto mt-[66px] h-[15px] w-[420px] rounded-full bg-white" />
            </footer>
        </div>
    );
}
